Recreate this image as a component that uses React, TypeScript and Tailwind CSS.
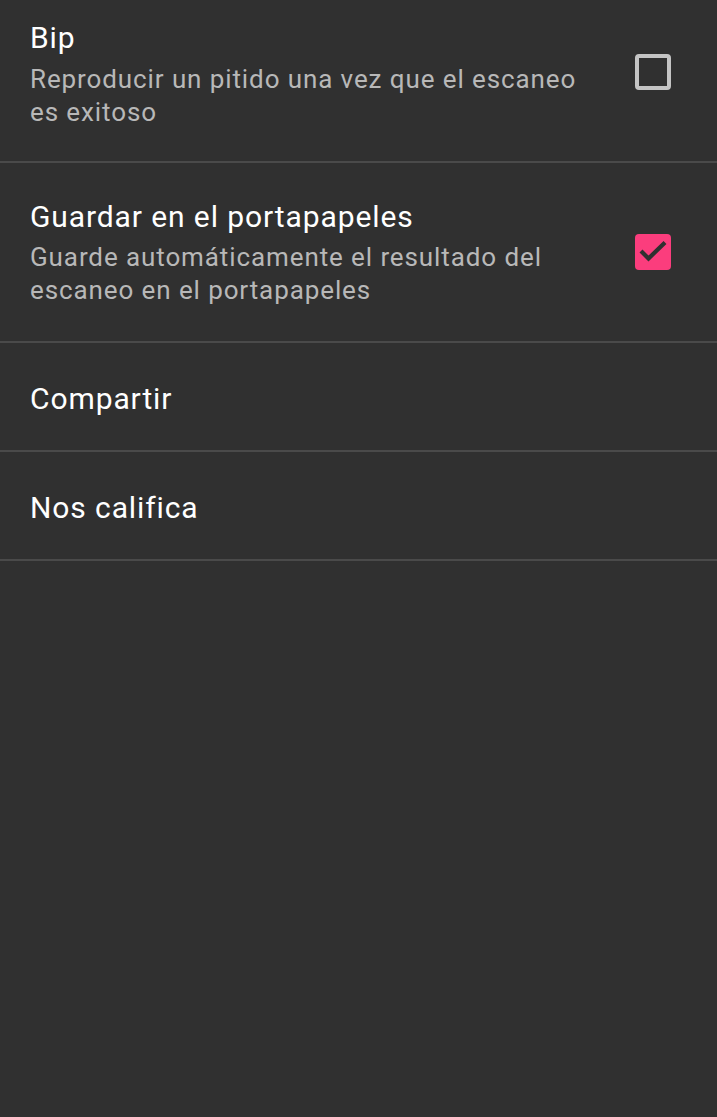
import React from "react";

const font = { fontFamily: "Roboto, 'Noto Sans', sans-serif" };

function Unchecked() {
  return (
    <div className="w-[36px] h-[36px] rounded-[4px] border-[4px] border-[#c4c4c4] shrink-0" />
  );
}

function Checked() {
  return (
    <div className="w-[36px] h-[36px] rounded-[4px] bg-[#fb3d7d] shrink-0 flex items-center justify-center">
      <svg width="36" height="36" viewBox="0 0 36 36">
        <path d="M6 17 L13.5 24.5 L30 8.5" fill="none" stroke="#303030" strokeWidth="4.2" />
      </svg>
    </div>
  );
}

function Divider() {
  return <div className="h-[2px] bg-[#4a4a4a]" />;
}

const title = "text-[30px] leading-[34px] tracking-[0.9px] text-white";
const summary = "text-[26px] leading-[33px] tracking-[0.9px] text-[#b8b8b8]";

export default function App() {
  return (
    <div className="w-[717px] h-[1117px] bg-[#303030] overflow-hidden" style={font}>
      {/* Row 1 */}
      <div className="h-[161px] flex items-start pl-[30px] pr-[46px]">
        <div className="flex-1 pt-[21px] pr-[36px]">
          <div className={title}>Bip</div>
          <div className={"mt-[8px] " + summary}>
            Reproducir un pitido una vez que el escaneo es exitoso
          </div>
        </div>
        <div className="pt-[54px]">
          <Unchecked />
        </div>
      </div>
      <Divider />
      {/* Row 2 */}
      <div className="h-[178px] flex items-start pl-[30px] pr-[46px]">
        <div className="flex-1 pt-[37px] pr-[36px]">
          <div className={title}>Guardar en el portapapeles</div>
          <div className={"mt-[7px] " + summary}>
            Guarde automáticamente el resultado del escaneo en el portapapeles
          </div>
        </div>
        <div className="pt-[71px]">
          <Checked />
        </div>
      </div>
      <Divider />
      {/* Row 3 */}
      <div className="h-[107px] pl-[30px] pt-[39px]">
        <div className={title}>Compartir</div>
      </div>
      <Divider />
      {/* Row 4 */}
      <div className="h-[107px] pl-[30px] pt-[39px]">
        <div className={title}>Nos califica</div>
      </div>
      <Divider />
    </div>
  );
}
